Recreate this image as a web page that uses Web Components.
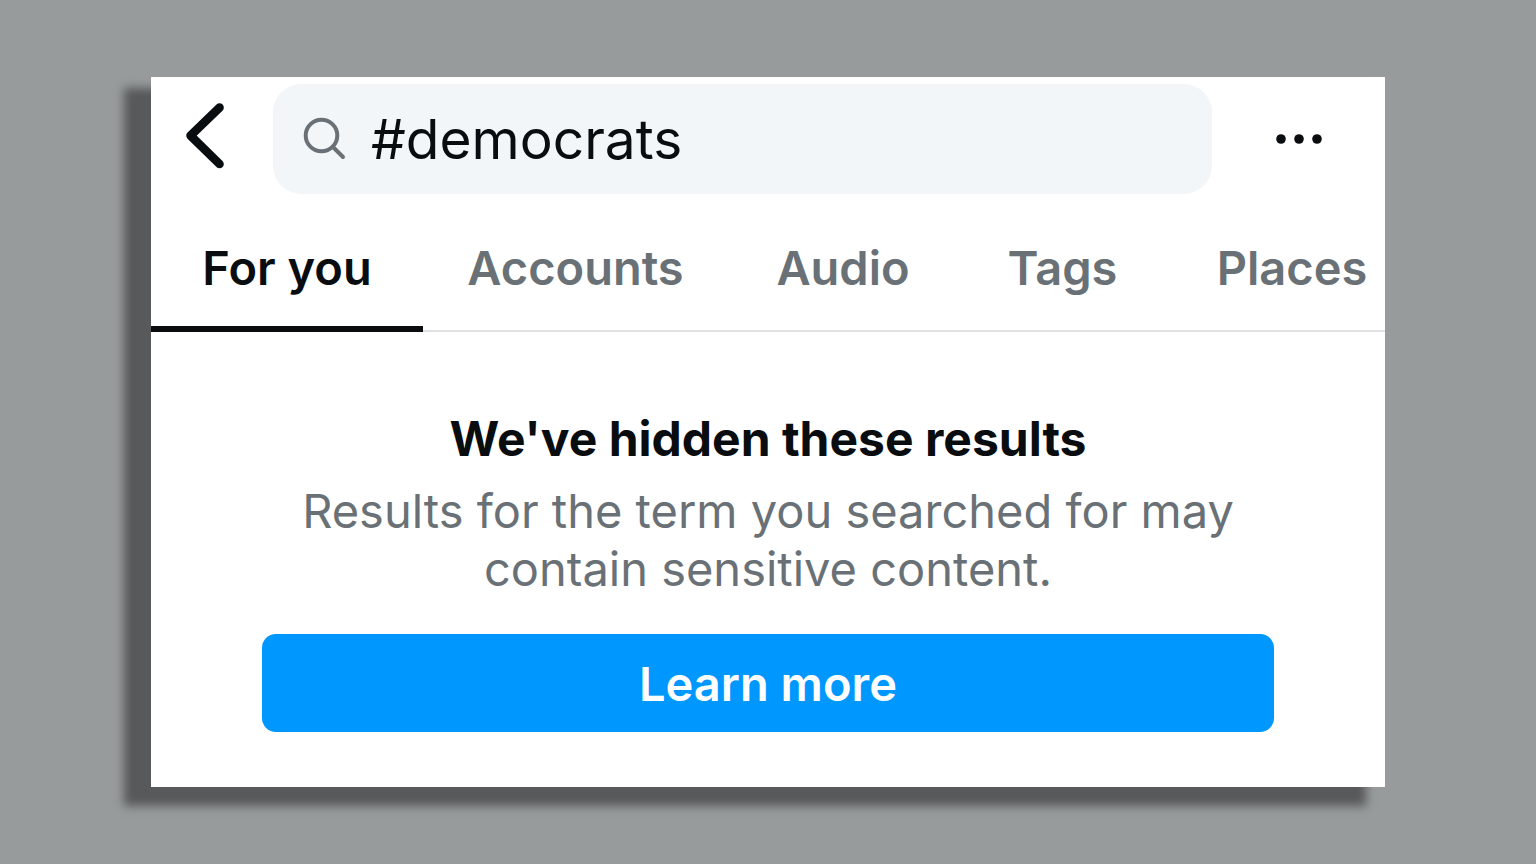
<!DOCTYPE html>
<html lang="en">
<head>
<meta charset="utf-8">
<meta name="viewport" content="width=device-width, initial-scale=1">
<title>Search</title>
<style>
  body {
    margin: 0;
    background: #979b9b;
    color: #0a0d10;
    font-family: Inter, "Liberation Sans", sans-serif;
  }
</style>
</head>
<body>
<search-page></search-page>

<script>
const define = (name, html, setup) => {
  const template = document.createElement("template");
  template.innerHTML = html;
  customElements.define(name, class extends HTMLElement {
    constructor() {
      super();
      this.attachShadow({ mode: "open" }).append(template.content.cloneNode(true));
    }
    connectedCallback() {
      if (setup) setup(this, this.shadowRoot);
    }
  });
};

// Rounded search field with a leading magnifier
define("search-field", `
  <style>
    :host { display: block; }
    label {
      display: flex; align-items: center; gap: 24px;
      height: 110px; box-sizing: border-box; padding: 0 30px;
      background: #f3f6f9; border-radius: 28px;
    }
    svg { flex: none; width: 44px; height: 44px; }
    input {
      flex: 1; min-width: 0; height: 80px; padding: 0; border: 0; outline: 0;
      background: none; color: #0a0d10; font-family: inherit; font-size: 55px;
    }
  </style>
  <label>
    <svg viewBox="0 0 44 44" fill="none" stroke="#6a7176" stroke-width="4" stroke-linecap="round" aria-hidden="true">
      <circle cx="18.5" cy="18.5" r="15.8"/><path d="M30 30l10 10"/>
    </svg>
    <input type="text" aria-label="Search" spellcheck="false">
  </label>`,
  (host, root) => { root.querySelector("input").value = host.getAttribute("value") || ""; });

// Back arrow, search field and overflow menu
define("search-header", `
  <style>
    :host { display: flex; padding-top: 7px; }
    search-field { flex: 1; min-width: 0; }
    button { flex: none; display: flex; align-items: center; padding: 0; border: 0; background: none; height: 110px; }
    .back { width: 122px; padding-left: 32px; }
    .more { width: 173px; justify-content: center; }
    svg { display: block; }
  </style>
  <button class="back" aria-label="Back">
    <svg width="44" height="72" viewBox="0 0 44 72" fill="none" stroke="#0a0d10" stroke-width="8.6" stroke-linecap="round" stroke-linejoin="round"><path d="M36.5 4.6L7.5 32.6L36.5 61"/></svg>
  </button>
  <search-field value="#democrats"></search-field>
  <button class="more" aria-label="More options">
    <svg width="48" height="12" viewBox="0 0 48 12" fill="#0a0d10"><circle cx="6" cy="6" r="4.8"/><circle cx="24" cy="6" r="4.8"/><circle cx="42" cy="6" r="4.8"/></svg>
  </button>`);

define("search-tab", `
  <style>
    :host { display: block; }
    button {
      width: 100%; height: 122px; padding: 0; border: 0; border-bottom: 6px solid transparent;
      background: none; color: #6a7176; font-family: inherit; font-size: 47px; font-weight: 600;
      line-height: 58px; white-space: nowrap;
    }
    :host([selected]) button { color: #0a0d10; border-color: #0a0d10; }
  </style>
  <button role="tab"><slot></slot></button>`,
  (host, root) => root.querySelector("button").setAttribute("aria-selected", host.hasAttribute("selected")));

// Tab strip: the last tab runs past the right edge
define("search-tabs", `
  <style>
    :host { display: block; overflow: hidden; padding-top: 16px; }
    div {
      display: grid; grid-template-columns: 272fr 305fr 230fr 209fr 250fr; margin-right: -32px;
      box-shadow: inset 0 -2px #dfe1e3;
    }
  </style>
  <div role="tablist"><slot></slot></div>`);

define("hidden-results", `
  <style>
    :host { display: block; padding: 78px 111px 55px; text-align: center; }
    h2 { margin: 0; font-size: 48px; font-weight: 700; line-height: 58px; }
    p { margin: 14px 0 36px; color: #6a7176; font-size: 47px; line-height: 58px; }
    button {
      display: block; width: 100%; height: 98px; padding: 0; border: 0; border-radius: 14px;
      background: #0098ff; color: #fff; font-family: inherit; font-size: 47px; font-weight: 600;
    }
  </style>
  <h2><slot name="title"></slot></h2>
  <p><slot></slot></p>
  <button><slot name="action"></slot></button>`);

define("search-page", `
  <style>
    :host { display: block; padding: 77px 151px; }
    main { background: #fff; box-shadow: -23px 15px 9px 4px #58595b; }
  </style>
  <main>
    <search-header></search-header>
    <search-tabs>
      <search-tab selected>For you</search-tab>
      <search-tab>Accounts</search-tab>
      <search-tab>Audio</search-tab>
      <search-tab>Tags</search-tab>
      <search-tab>Places</search-tab>
    </search-tabs>
    <hidden-results>
      <span slot="title">We've hidden these results</span>
      Results for the term you searched for may contain sensitive content.
      <span slot="action">Learn more</span>
    </hidden-results>
  </main>`);
</script>
</body>
</html>
